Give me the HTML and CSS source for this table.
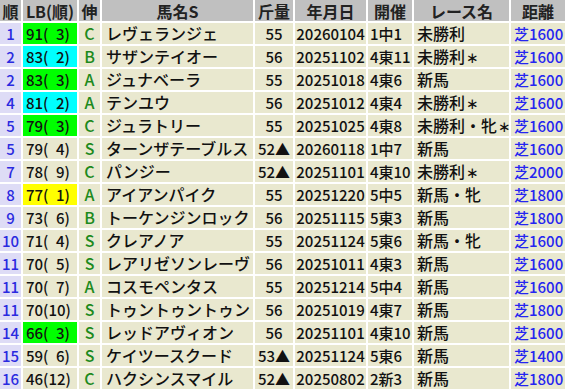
FILE: index.html
```html
<!DOCTYPE html>
<html lang="ja">
<head>
<meta charset="utf-8">
<link rel="stylesheet" href="styles.css">
</head>
<body>
<div class="grid">
  <div class="h">順</div><div class="h">LB(順)</div><div class="h">伸</div><div class="h">馬名S</div><div class="h">斤量</div><div class="h">年月日</div><div class="h">開催</div><div class="h">レース名</div><div class="h">距離</div>

  <div class="rk">1</div><div class="lb g">91(&#x2002;3)</div><div class="gr">C</div><div class="nm">レヴェランジェ</div><div class="num">55</div><div class="num">20260104</div><div class="kai">1中1</div><div class="race">未勝利</div><div class="dist">芝1600</div>
  <div class="rk">2</div><div class="lb c">83(&#x2002;2)</div><div class="gr">B</div><div class="nm">サザンテイオー</div><div class="num">56</div><div class="num">20251102</div><div class="kai">4東11</div><div class="race">未勝利<span class="ast">∗</span></div><div class="dist">芝1600</div>
  <div class="rk">2</div><div class="lb g">83(&#x2002;3)</div><div class="gr">A</div><div class="nm">ジュナベーラ</div><div class="num">55</div><div class="num">20251018</div><div class="kai">4東6</div><div class="race">新馬</div><div class="dist">芝1600</div>
  <div class="rk">4</div><div class="lb c">81(&#x2002;2)</div><div class="gr">A</div><div class="nm">テンユウ</div><div class="num">56</div><div class="num">20251012</div><div class="kai">4東4</div><div class="race">未勝利<span class="ast">∗</span></div><div class="dist">芝1600</div>
  <div class="rk">5</div><div class="lb g">79(&#x2002;3)</div><div class="gr">C</div><div class="nm">ジュラトリー</div><div class="num">55</div><div class="num">20251025</div><div class="kai">4東8</div><div class="race">未勝利・牝<span class="ast">∗</span></div><div class="dist">芝1600</div>
  <div class="rk">5</div><div class="lb">79(&#x2002;4)</div><div class="gr">S</div><div class="nm">ターンザテーブルス</div><div class="num">52▲</div><div class="num">20260118</div><div class="kai">1中7</div><div class="race">新馬</div><div class="dist">芝1600</div>
  <div class="rk">7</div><div class="lb">78(&#x2002;9)</div><div class="gr">C</div><div class="nm">パンジー</div><div class="num">52▲</div><div class="num">20251101</div><div class="kai">4東10</div><div class="race">未勝利<span class="ast">∗</span></div><div class="dist">芝2000</div>
  <div class="rk">8</div><div class="lb y">77(&#x2002;1)</div><div class="gr">A</div><div class="nm">アイアンパイク</div><div class="num">55</div><div class="num">20251220</div><div class="kai">5中5</div><div class="race">新馬・牝</div><div class="dist">芝1800</div>
  <div class="rk">9</div><div class="lb">73(&#x2002;6)</div><div class="gr">B</div><div class="nm">トーケンジンロック</div><div class="num">56</div><div class="num">20251115</div><div class="kai">5東3</div><div class="race">新馬</div><div class="dist">芝1800</div>
  <div class="rk">10</div><div class="lb">71(&#x2002;4)</div><div class="gr">S</div><div class="nm">クレアノア</div><div class="num">55</div><div class="num">20251124</div><div class="kai">5東6</div><div class="race">新馬・牝</div><div class="dist">芝1600</div>
  <div class="rk">11</div><div class="lb">70(&#x2002;5)</div><div class="gr">S</div><div class="nm">レアリゼソンレーヴ</div><div class="num">56</div><div class="num">20251011</div><div class="kai">4東3</div><div class="race">新馬</div><div class="dist">芝1600</div>
  <div class="rk">11</div><div class="lb">70(&#x2002;7)</div><div class="gr">A</div><div class="nm">コスモペンタス</div><div class="num">55</div><div class="num">20251214</div><div class="kai">5中4</div><div class="race">新馬</div><div class="dist">芝1600</div>
  <div class="rk">11</div><div class="lb">70(10)</div><div class="gr">S</div><div class="nm">トゥントゥントゥン</div><div class="num">56</div><div class="num">20251019</div><div class="kai">4東7</div><div class="race">新馬</div><div class="dist">芝1800</div>
  <div class="rk">14</div><div class="lb g">66(&#x2002;3)</div><div class="gr">S</div><div class="nm">レッドアヴィオン</div><div class="num">56</div><div class="num">20251101</div><div class="kai">4東10</div><div class="race">新馬</div><div class="dist">芝1600</div>
  <div class="rk">15</div><div class="lb">59(&#x2002;6)</div><div class="gr">S</div><div class="nm">ケイツースクード</div><div class="num">53▲</div><div class="num">20251124</div><div class="kai">5東6</div><div class="race">新馬</div><div class="dist">芝1400</div>
  <div class="rk">16</div><div class="lb">46(12)</div><div class="gr">C</div><div class="nm">ハクシンスマイル</div><div class="num">52▲</div><div class="num">20250802</div><div class="kai">2新3</div><div class="race">新馬</div><div class="dist">芝1800</div>
</div>
</body>
</html>
```

FILE: styles.css
```css
html, body {
  margin: 0;
  padding: 0;
  background: #fff;
}
.grid {
  display: grid;
  grid-template-columns: 21px 54px 21px 151px 38px 71px 44px 95px 54px;
  grid-auto-rows: 21px;
  gap: 2px;
  width: 565px;
  background: #fff;
  font-family: "Noto Sans CJK JP", "Noto Sans", sans-serif;
  font-size: 15px;
  font-weight: 500;
  line-height: 21px;
  color: #111;
}
.grid > div {
  background: #e9e8cf;
  white-space: nowrap;
}
.grid > .h {
  background: #c0c0c0;
  text-align: center;
  font-size: 16px;
  font-weight: 700;
  line-height: 19px;
  padding-top: 2px;
  color: #222;
}
.grid > .rk {
  background: #dedcf6;
  color: #2a2ae0;
  text-align: center;
}
.lb {
  padding-left: 3px;
}
.grid > .lb.g { background: #00ff00; }
.grid > .lb.c { background: #00ffff; }
.grid > .lb.y { background: #ffff00; }
.gr {
  color: #1d8a1d;
  text-align: center;
  font-size: 16px;
}
.nm {
  padding-left: 4px;
  font-size: 16px;
}
.num {
  text-align: center;
}
.kai {
  padding-left: 2px;
}
.race {
  padding-left: 3px;
  font-size: 16px;
}
.ast {
  display: inline-block;
  font-size: 15px;
  margin-left: 1px;
}
.dist {
  padding-left: 3px;
  color: #2525f0;
}
```
